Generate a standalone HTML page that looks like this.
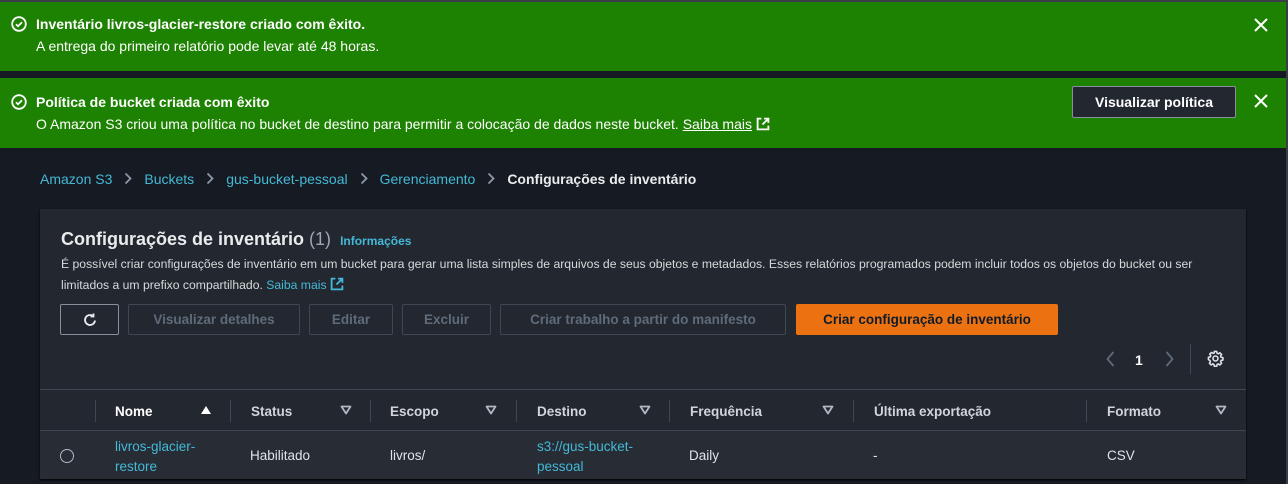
<!DOCTYPE html>
<html><head><meta charset="utf-8"><style>
*{margin:0;padding:0;box-sizing:border-box}
body{width:1288px;height:484px;overflow:hidden;background:#161a22;font-family:"Liberation Sans",sans-serif;color:#d5dbdb;position:relative;font-size:13px}
.a{position:absolute;white-space:nowrap}
.g{position:absolute;left:0;width:1286px;background:#1d8102;color:#fff}
.link{color:#44b9d6}
.btn{position:absolute;height:31px;border:1px solid #414750;border-radius:2px;color:#5f6b7a;font-weight:bold;font-size:13.5px;display:flex;align-items:center;justify-content:center;background:#232730}
.th{position:absolute;top:392px;height:38px;display:flex;align-items:center;font-weight:bold;font-size:13.5px;color:#d1d5db}
.sep{position:absolute;top:400px;width:1px;height:22px;background:#414750}
.tri{position:absolute;top:405px}
.td{position:absolute;font-size:13.5px;color:#e0e4e8}
.td.link{color:#44b9d6}
.bc{display:inline-block;vertical-align:-1px;margin:0 12px}
</style></head><body>
<div class="a" style="left:0;top:0;width:1288px;height:2px;background:#3a3f45"></div>
<div class="a" style="left:1286px;top:0;width:2px;height:484px;background:#3a3f45"></div>
<div class="g" style="top:2px;height:69px"></div>
<div class="g" style="top:78px;height:70px"></div>
<svg class="a" style="left:11px;top:16px" width="16" height="16" viewBox="0 0 16 16"><circle cx="8" cy="8" r="6.8" fill="none" stroke="#fff" stroke-width="1.8"/><path d="M5 8.2l2 2 4-4" fill="none" stroke="#fff" stroke-width="1.8"/></svg>
<div class="a" style="left:36px;top:16px;color:#fff;font-weight:bold;font-size:14px">Inventário livros-glacier-restore criado com êxito.</div>
<div class="a" style="left:36px;top:38px;color:#fff;font-size:14px">A entrega do primeiro relatório pode levar até 48 horas.</div>
<svg class="a" style="left:1254px;top:18px" width="14" height="14" viewBox="0 0 14 14"><path d="M1 1l12 12M13 1L1 13" stroke="#fff" stroke-width="2"/></svg>
<svg class="a" style="left:11px;top:94px" width="16" height="16" viewBox="0 0 16 16"><circle cx="8" cy="8" r="6.8" fill="none" stroke="#fff" stroke-width="1.8"/><path d="M5 8.2l2 2 4-4" fill="none" stroke="#fff" stroke-width="1.8"/></svg>
<div class="a" style="left:36px;top:94px;color:#fff;font-weight:bold;font-size:14px">Política de bucket criada com êxito</div>
<div class="a" style="left:36px;top:116px;color:#fff;font-size:14px">O Amazon S3 criou uma política no bucket de destino para permitir a colocação de dados neste bucket. <u>Saiba mais</u> <svg width="14" height="14" viewBox="0 0 13 13" style="vertical-align:-2px"><path d="M5 1.5H1.5v10h10V8M7.5 1.5h4v4M11.5 1.5L6 7" fill="none" stroke="#fff" stroke-width="1.7"/></svg></div>
<div class="a" style="left:1072px;top:86px;width:164px;height:32px;background:#232730;border:1px solid #8a9099;border-radius:2px;color:#fff;font-weight:bold;font-size:14px;display:flex;align-items:center;justify-content:center">Visualizar política</div>
<svg class="a" style="left:1254px;top:94px" width="14" height="14" viewBox="0 0 14 14"><path d="M1 1l12 12M13 1L1 13" stroke="#fff" stroke-width="2"/></svg>

<div class="a" style="left:40px;top:171px;font-size:14px"><span class="link">Amazon S3</span><svg class="bc" width="8" height="13" viewBox="0 0 8 13"><path d="M1.5 1.5l5 5-5 5" fill="none" stroke="#8d99a8" stroke-width="1.8"/></svg><span class="link">Buckets</span><svg class="bc" width="8" height="13" viewBox="0 0 8 13"><path d="M1.5 1.5l5 5-5 5" fill="none" stroke="#8d99a8" stroke-width="1.8"/></svg><span class="link">gus-bucket-pessoal</span><svg class="bc" width="8" height="13" viewBox="0 0 8 13"><path d="M1.5 1.5l5 5-5 5" fill="none" stroke="#8d99a8" stroke-width="1.8"/></svg><span class="link">Gerenciamento</span><svg class="bc" width="8" height="13" viewBox="0 0 8 13"><path d="M1.5 1.5l5 5-5 5" fill="none" stroke="#8d99a8" stroke-width="1.8"/></svg><b style="color:#e9ebed">Configurações de inventário</b></div>

<div class="a" style="left:40px;top:209px;width:1206px;height:270px;background:#232730;box-shadow:0 1px 2px #000"></div>
<div class="a" style="left:61px;top:229px;font-size:18px;font-weight:bold;color:#e9ebed">Configurações de inventário <span style="font-weight:normal;color:#9ba7b6">(1)</span> <span class="link" style="font-size:12px;margin-left:4px">Informações</span></div>
<div class="a" style="left:61px;top:257px;font-size:12.2px;color:#d5dbdb">É possível criar configurações de inventário em um bucket para gerar uma lista simples de arquivos de seus objetos e metadados. Esses relatórios programados podem incluir todos os objetos do bucket ou ser</div>
<div class="a" style="left:61px;top:277px;font-size:12.2px;color:#d5dbdb">limitados a um prefixo compartilhado. <span class="link">Saiba mais</span> <svg width="14" height="14" viewBox="0 0 13 13" style="vertical-align:-2px"><path d="M5 1.5H1.5v10h10V8M7.5 1.5h4v4M11.5 1.5L6 7" fill="none" stroke="#44b9d6" stroke-width="1.7"/></svg></div>

<div class="btn" style="left:60px;top:304px;width:59px;border-color:#8a9099;color:#e9ebed"><svg width="16" height="16" viewBox="0 0 16 16"><path d="M13 8.5A5 5 0 1 1 11 4M11.5 1.5v3h-3" fill="none" stroke="#e9ebed" stroke-width="1.8"/></svg></div>
<div class="btn" style="left:128px;top:304px;width:172px">Visualizar detalhes</div>
<div class="btn" style="left:309px;top:304px;width:84px">Editar</div>
<div class="btn" style="left:402px;top:304px;width:89px">Excluir</div>
<div class="btn" style="left:500px;top:304px;width:286px">Criar trabalho a partir do manifesto</div>
<div class="btn" style="left:796px;top:304px;width:262px;background:#ec7211;border-color:#ec7211;color:#0f1b2a">Criar configuração de inventário</div>

<svg class="a" style="left:1106px;top:351px" width="9" height="16" viewBox="0 0 9 16"><path d="M7.5 1L1.5 8l6 7" fill="none" stroke="#5f6b7a" stroke-width="1.8"/></svg>
<div class="a" style="left:1135px;top:352px;font-size:14px;font-weight:bold;color:#fff">1</div>
<svg class="a" style="left:1165px;top:351px" width="9" height="16" viewBox="0 0 9 16"><path d="M1.5 1l6 7-6 7" fill="none" stroke="#5f6b7a" stroke-width="1.8"/></svg>
<div class="a" style="left:1190px;top:344px;width:1px;height:30px;background:#414750"></div>
<svg class="a" style="left:1207px;top:350px" width="17" height="17" viewBox="0 0 24 24"><path d="M10.3 2h3.4l.5 2.6 1.8.8 2.2-1.5 2.4 2.4-1.5 2.2.8 1.8 2.6.5v3.4l-2.6.5-.8 1.8 1.5 2.2-2.4 2.4-2.2-1.5-1.8.8-.5 2.6h-3.4l-.5-2.6-1.8-.8-2.2 1.5-2.4-2.4 1.5-2.2-.8-1.8L2 13.7v-3.4l2.6-.5.8-1.8-1.5-2.2 2.4-2.4 2.2 1.5 1.8-.8z" fill="none" stroke="#e0e4e8" stroke-width="2.2" stroke-linejoin="round"/><circle cx="12" cy="12" r="3.5" fill="none" stroke="#e0e4e8" stroke-width="2.2"/></svg>

<div class="a" style="left:40px;top:389px;width:1206px;height:1px;background:#414750"></div>
<div class="a" style="left:40px;top:430px;width:1206px;height:1px;background:#414750"></div>
<div class="a" style="left:40px;top:431px;width:1206px;height:48px;background:#272c35"></div>
<div class="sep" style="left:95px"></div>
<div class="th" style="left:115px;color:#fff">Nome</div><svg class="tri" style="left:200px" width="12" height="10" viewBox="0 0 12 10"><path d="M6 1l5 8H1z" fill="#fff"/></svg>
<div class="sep" style="left:230px"></div>
<div class="th" style="left:251px">Status</div><svg class="tri" style="left:340px" width="12" height="10" viewBox="0 0 12 10"><path d="M1.5 1.5h9L6 8.5z" fill="none" stroke="#b0b8c0" stroke-width="1.8" stroke-linejoin="round"/></svg>
<div class="sep" style="left:370px"></div>
<div class="th" style="left:390px">Escopo</div><svg class="tri" style="left:485px" width="12" height="10" viewBox="0 0 12 10"><path d="M1.5 1.5h9L6 8.5z" fill="none" stroke="#b0b8c0" stroke-width="1.8" stroke-linejoin="round"/></svg>
<div class="sep" style="left:516px"></div>
<div class="th" style="left:537px">Destino</div><svg class="tri" style="left:639px" width="12" height="10" viewBox="0 0 12 10"><path d="M1.5 1.5h9L6 8.5z" fill="none" stroke="#b0b8c0" stroke-width="1.8" stroke-linejoin="round"/></svg>
<div class="sep" style="left:669px"></div>
<div class="th" style="left:690px">Frequência</div><svg class="tri" style="left:822px" width="12" height="10" viewBox="0 0 12 10"><path d="M1.5 1.5h9L6 8.5z" fill="none" stroke="#b0b8c0" stroke-width="1.8" stroke-linejoin="round"/></svg>
<div class="sep" style="left:853px"></div>
<div class="th" style="left:874px">Última exportação</div>
<div class="sep" style="left:1086px"></div>
<div class="th" style="left:1107px">Formato</div><svg class="tri" style="left:1215px" width="12" height="10" viewBox="0 0 12 10"><path d="M1.5 1.5h9L6 8.5z" fill="none" stroke="#b0b8c0" stroke-width="1.8" stroke-linejoin="round"/></svg>

<div class="a" style="left:60px;top:449px;width:14px;height:14px;border:1.5px solid #b0b8c0;border-radius:50%"></div>
<div class="td link" style="left:115px;top:437px;line-height:20px">livros-glacier-<br>restore</div>
<div class="td" style="left:250px;top:448px">Habilitado</div>
<div class="td" style="left:390px;top:448px">livros/</div>
<div class="td link" style="left:537px;top:437px;line-height:20px">s3://gus-bucket-<br>pessoal</div>
<div class="td" style="left:689px;top:448px">Daily</div>
<div class="td" style="left:873px;top:448px">-</div>
<div class="td" style="left:1107px;top:448px">CSV</div>
</body></html>
